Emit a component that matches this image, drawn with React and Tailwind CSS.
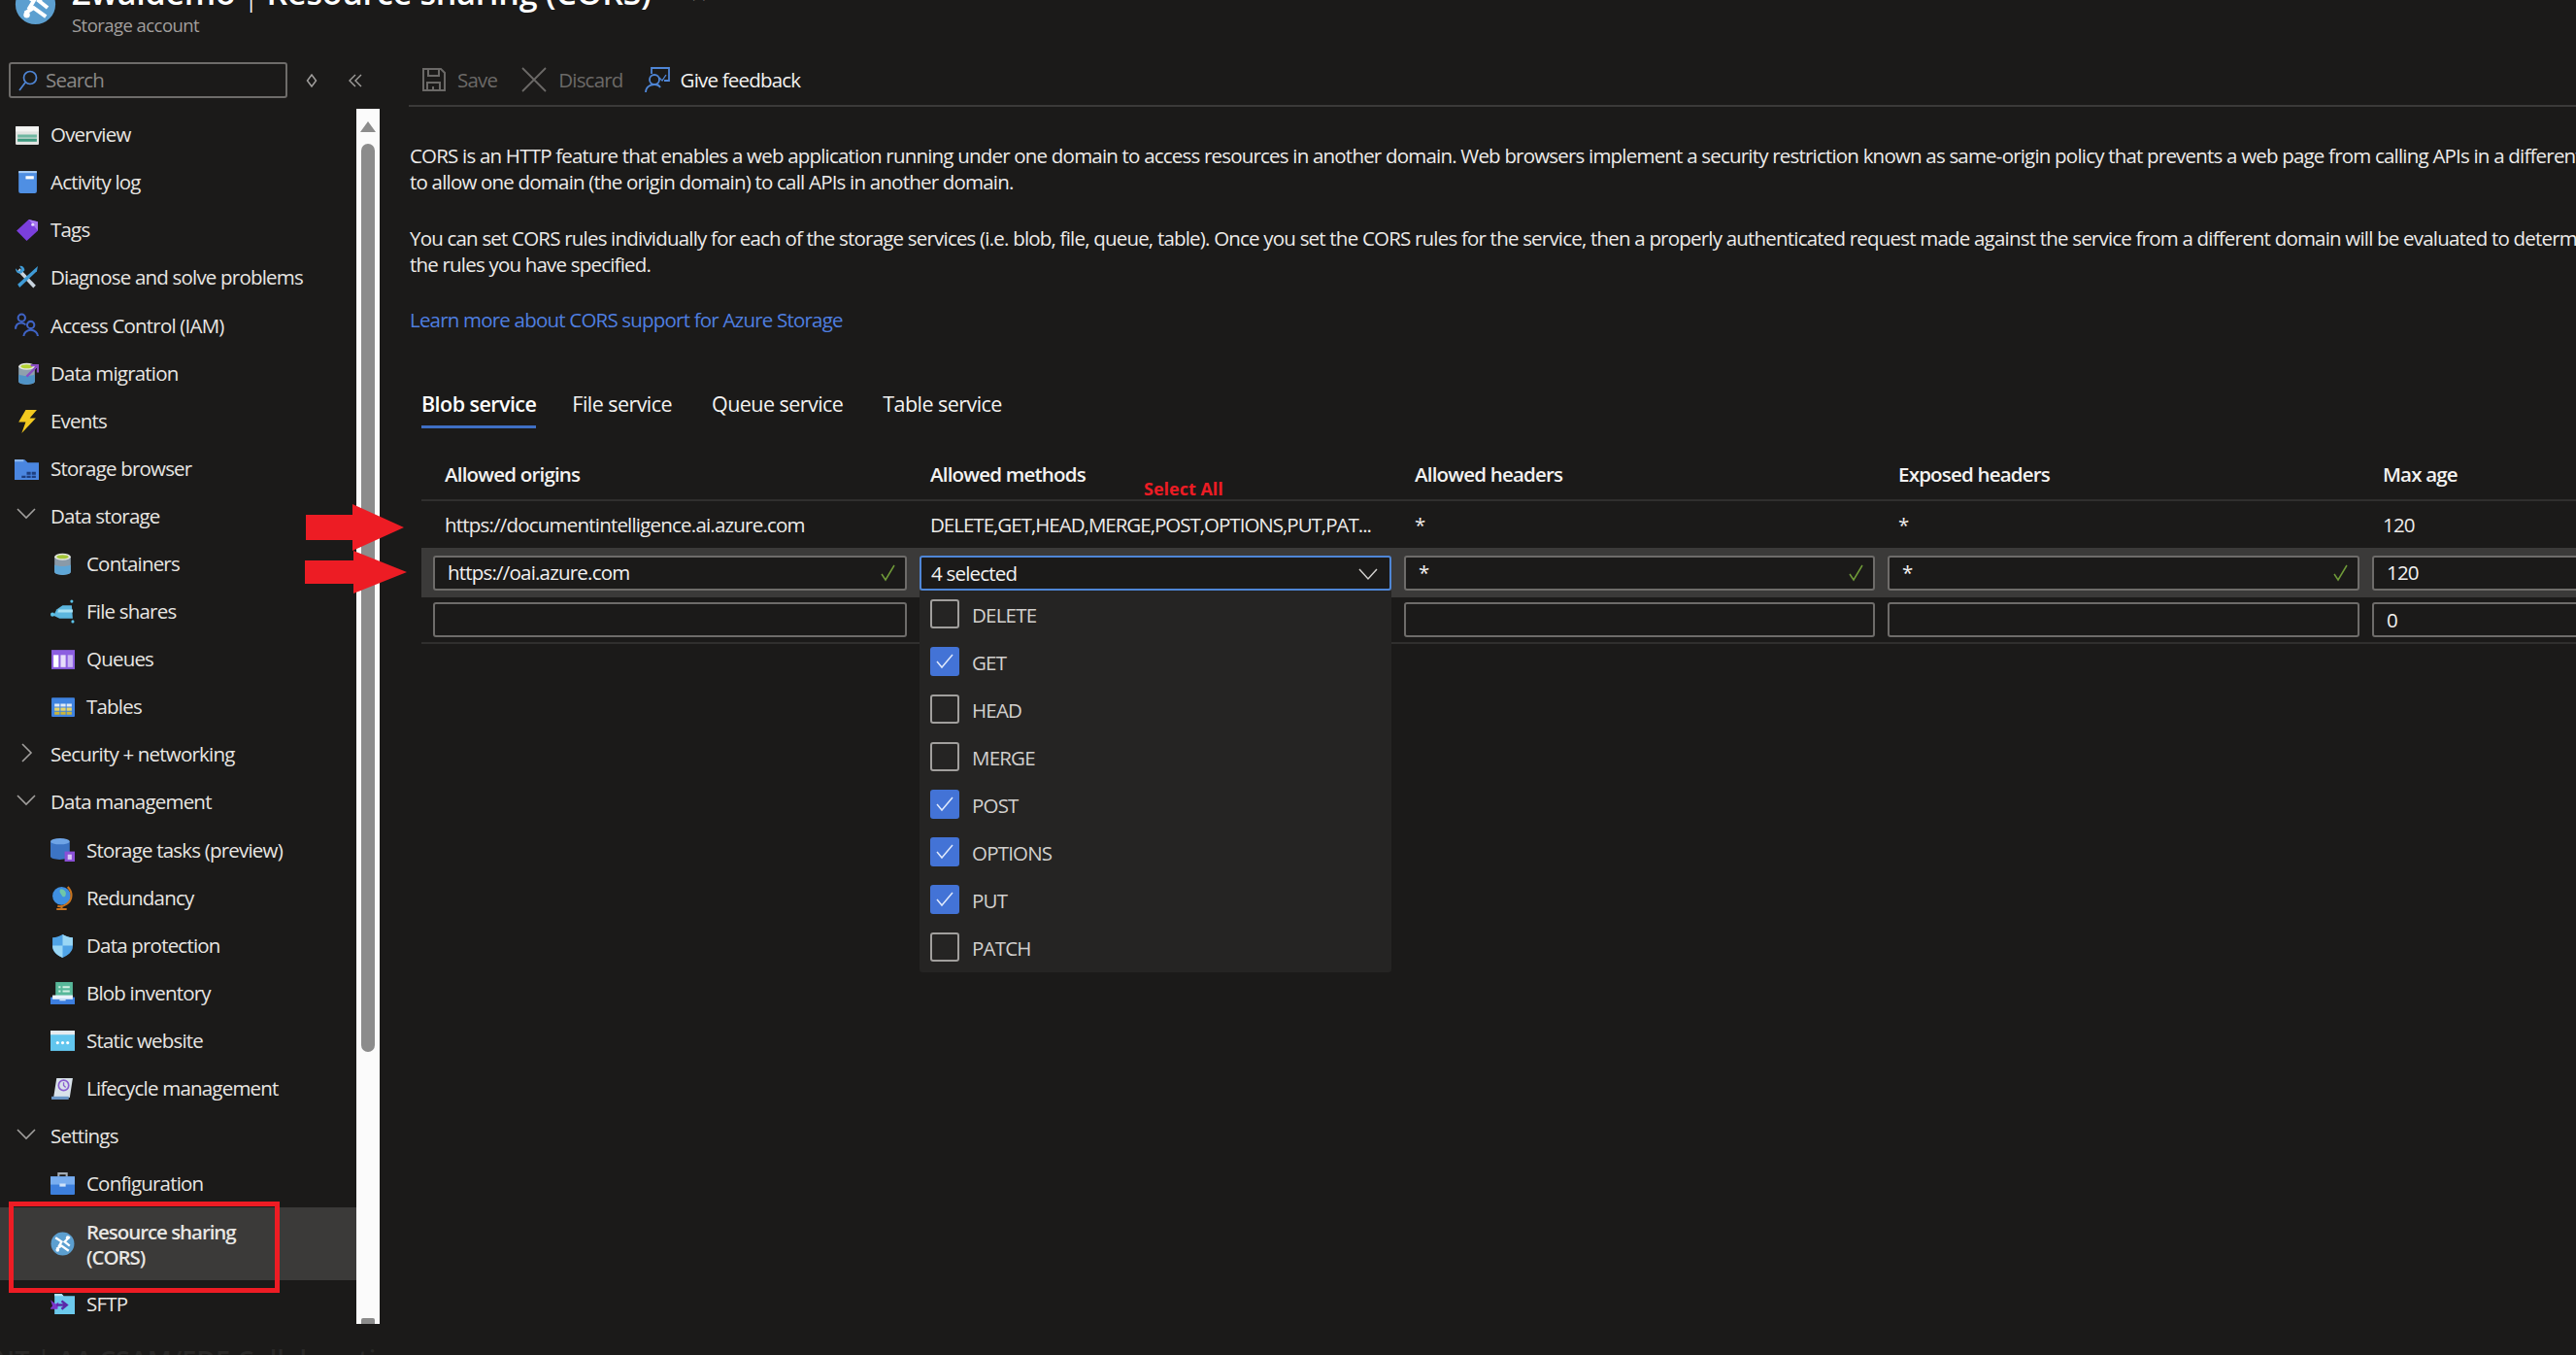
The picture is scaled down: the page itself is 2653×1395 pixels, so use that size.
const Cyl = ({ top = '#a4c639', body = '#8a9aa8', low = '#5ea6d6' }) => (
  <>
    <path d="M4 5v15c0 1.6 3.6 3 8 3s8-1.4 8-3V5z" fill={body} />
    <path d="M4 13v7c0 1.6 3.6 3 8 3s8-1.4 8-3v-7c-2 1-5 1.4-8 1.4S6 14 4 13z" fill={low} />
    <ellipse cx="12" cy="5" rx="8" ry="3.4" fill="#e4e6e0" />
    <ellipse cx="12" cy="5" rx="6" ry="2" fill={top} />
  </>
)

const Globe = () => (
  <>
    <circle cx="12" cy="12" r="11.5" fill="#5c9fd0" />
    <path d="M5 6l6 4-3 5M19 5l-5 5 5 4M6 17l5-3 7 5" stroke="#fff" strokeWidth="2.2" fill="none" />
    <circle cx="7" cy="18" r="1.8" fill="#fff" />
    <circle cx="17" cy="6" r="1.8" fill="#fff" />
  </>
)

const icons = {
  overview: (
    <>
      <rect x="1" y="4" width="23" height="18" rx="1" fill="#e2e4e2" />
      <rect x="1" y="4" width="23" height="5" fill="#f4f5f3" />
      <rect x="3" y="12" width="19" height="3" fill="#6fb7a2" />
      <rect x="3" y="16" width="19" height="3" fill="#3f9a80" />
    </>
  ),
  activity: (
    <>
      <rect x="4" y="1" width="18" height="22" rx="2" fill="#4f8fe3" />
      <rect x="4" y="1" width="18" height="2" fill="#a9cdf5" />
      <rect x="11" y="6" width="8" height="3" fill="#fff" />
    </>
  ),
  tags: (
    <>
      <path d="M2 13L14 2l9 2 0 9-11 10z" fill="#7b3fdc" />
      <path d="M14 2l9 2 0 9z" fill="#a777ef" />
      <circle cx="18" cy="7" r="1.5" fill="#e7dcfb" />
    </>
  ),
  tools: (
    <>
      <path d="M5 3l16 17-2.5 2.5L3 6z" fill="#c9d4de" />
      <path d="M23 1L3 19l2 3L22 6z" fill="#3f9bd6" />
      <path d="M1 3c0 4 3 6 6 5l3-3c0-3-3-5-5-4l2 3-3 2z" fill="#3f9bd6" />
    </>
  ),
  access: (
    <g fill="none" stroke="#3f63c4" strokeWidth="2">
      <circle cx="7" cy="5" r="3.5" />
      <path d="M1 16c0-4 2-6 6-6 2 0 3 .6 4 2" />
      <circle cx="16" cy="12" r="3.5" />
      <path d="M9 23c0-3 3-6 7-6s7 3 7 6" />
    </g>
  ),
  migration: (
    <>
      <Cyl top="#b5d334" body="#8fa1ad" low="#4f93c7" />
      <path d="M12 15L22 5M16 4h7v7" stroke="#8a4ec2" strokeWidth="2.2" fill="none" />
    </>
  ),
  events: <path d="M11 1h11l-7 8h6L7 24l4-11H4z" fill="#f2c91f" />,
  browser: (
    <>
      <path d="M0 3h10l3 3h11v17H0z" fill="#4a86e0" />
      <rect x="0" y="3" width="9" height="2" fill="#8fb9ef" />
      <path d="M7 19h4v2H7zM12 19h4v2h-4zM17 19h4v2h-4zM12 15h4v3h-4zM17 15h4v3h-4z" fill="#1e3f7f" />
    </>
  ),
  containers: <Cyl top="#a4c639" />,
  files: (
    <>
      <path d="M6 10l6-4h9l1 13H9L3 16z" fill="#5cb6de" />
      <path d="M8 10h14v3H7z" fill="#a9e0f2" />
      <circle cx="2" cy="15" r="2" fill="#5cc2e8" />
      <circle cx="21" cy="2" r="1.5" fill="#5cc2e8" />
      <circle cx="22" cy="22" r="1.5" fill="#5cc2e8" />
    </>
  ),
  queues: (
    <>
      <rect x="1" y="3" width="23" height="19" fill="#8c5ee0" />
      <rect x="3" y="8" width="5" height="12" fill="#fff" />
      <rect x="10" y="8" width="5" height="12" fill="#e6dcfa" />
      <rect x="17" y="8" width="5" height="12" fill="#c9b5f2" />
    </>
  ),
  tables: (
    <>
      <rect x="1" y="3" width="23" height="19" rx="1" fill="#3f83e0" />
      <path d="M4 9h5v3H4zM10 9h5v3h-5zM16 9h5v3h-5z" fill="#dfe9f5" />
      <path d="M4 13h5v3H4zM10 13h5v3h-5zM16 13h5v3h-5z" fill="#e8d66a" />
      <path d="M4 17h5v3H4zM10 17h5v3h-5zM16 17h5v3h-5z" fill="#cbb53c" />
    </>
  ),
  tasks: (
    <>
      <path d="M0 4v15c0 1.6 4 3 9 3s10-1.4 10-3V4z" fill="#3c74c4" />
      <ellipse cx="9.5" cy="4" rx="9.5" ry="3" fill="#6ea4e6" />
      <rect x="14" y="14" width="10" height="11" fill="#8a4fd6" />
      <rect x="17" y="17" width="4" height="5" fill="#d8c6f5" />
    </>
  ),
  redundancy: (
    <>
      <circle cx="11" cy="10" r="9" fill="#3f8fe0" />
      <path d="M10 3c4 0 6 3 5 6s-3 2-4 0-3-3-1-6z" fill="#6fc7a8" />
      <path d="M17 1c5 5 5 13-1 17-3 2-6 3-9 2" stroke="#c9741f" strokeWidth="2" fill="none" />
      <path d="M11 20v2M6 23h10" stroke="#c9741f" strokeWidth="2" />
    </>
  ),
  shield: (
    <>
      <path d="M12 1c3 2 6 3 10 3v9c0 5-5 9-10 11C7 22 2 18 2 13V4c4 0 7-1 10-3z" fill="#4fa3e6" />
      <path d="M12 1c3 2 6 3 10 3v8H12zM12 12v12C7 22 2 18 2 12z" fill="#9ad7f5" />
    </>
  ),
  inventory: (
    <>
      <path d="M5 1h17v15H5z" fill="#58b89a" />
      <path d="M8 5h2v2H8zM8 9h2v2H8zM12 5h7v2h-7zM12 9h7v2h-7z" fill="#d2efe4" />
      <path d="M0 16h24v7H0z" fill="#3d7fe0" />
      <path d="M2 14h20v4H2z" fill="#e9f2fb" />
      <rect x="9" y="18" width="6" height="1.5" fill="#cfe2f8" />
    </>
  ),
  website: (
    <>
      <rect x="0" y="2" width="24" height="20" fill="#62c6ee" />
      <rect x="0" y="2" width="24" height="4" fill="#e6ebee" />
      <circle cx="7" cy="14" r="1.5" fill="#fff" />
      <circle cx="12" cy="14" r="1.5" fill="#fff" />
      <circle cx="17" cy="14" r="1.5" fill="#fff" />
    </>
  ),
  lifecycle: (
    <>
      <path d="M6 2h16l-3 19H3z" fill="#d9e2ea" />
      <path d="M1 20h17v3H1z" fill="#6b97c7" />
      <circle cx="13" cy="9" r="5" fill="none" stroke="#8a5fd0" strokeWidth="1.6" />
      <path d="M13 6v3l2 2" stroke="#8a5fd0" strokeWidth="1.3" fill="none" />
    </>
  ),
  config: (
    <>
      <path d="M8 5V2h8v3" fill="none" stroke="#a3acb5" strokeWidth="2" />
      <rect x="0" y="5" width="24" height="18" rx="1" fill="#3d7fdc" />
      <rect x="0" y="5" width="24" height="8" fill="#79aef0" />
      <rect x="9" y="12" width="6" height="3" fill="#cfe2f8" />
    </>
  ),
  cors: <Globe />,
  sftp: (
    <>
      <path d="M4 2h7l2 2h11v18H4z" fill="#6cc9ec" />
      <path d="M4 2h7l2 2H4z" fill="#b7e7f7" />
      <path d="M0 8l5 4 3-2-1 7-8 0 3-3z" fill="#7a35c9" />
      <path d="M6 13h9M11 9l5 4-5 4" stroke="#5a28a8" strokeWidth="2.4" fill="none" />
    </>
  ),
}

const menu = [
  { label: 'Overview', icon: 'overview' },
  { label: 'Activity log', icon: 'activity' },
  { label: 'Tags', icon: 'tags' },
  { label: 'Diagnose and solve problems', icon: 'tools' },
  { label: 'Access Control (IAM)', icon: 'access' },
  { label: 'Data migration', icon: 'migration' },
  { label: 'Events', icon: 'events' },
  { label: 'Storage browser', icon: 'browser' },
  { label: 'Data storage', open: true },
  { label: 'Containers', icon: 'containers', sub: true },
  { label: 'File shares', icon: 'files', sub: true },
  { label: 'Queues', icon: 'queues', sub: true },
  { label: 'Tables', icon: 'tables', sub: true },
  { label: 'Security + networking', open: false },
  { label: 'Data management', open: true },
  { label: 'Storage tasks (preview)', icon: 'tasks', sub: true },
  { label: 'Redundancy', icon: 'redundancy', sub: true },
  { label: 'Data protection', icon: 'shield', sub: true },
  { label: 'Blob inventory', icon: 'inventory', sub: true },
  { label: 'Static website', icon: 'website', sub: true },
  { label: 'Lifecycle management', icon: 'lifecycle', sub: true },
  { label: 'Settings', open: true },
  { label: 'Configuration', icon: 'config', sub: true },
  { label: 'Resource sharing (CORS)', icon: 'cors', sub: true, active: true },
  { label: 'SFTP', icon: 'sftp', sub: true },
]

const methods = [
  ['DELETE', false],
  ['GET', true],
  ['HEAD', false],
  ['MERGE', false],
  ['POST', true],
  ['OPTIONS', true],
  ['PUT', true],
  ['PATCH', false],
]

function Chevron({ open }) {
  return (
    <svg width="24" height="24" viewBox="0 0 24 24" fill="none" stroke="#a19f9d" strokeWidth="1.6" className="-mt-[4px]">
      <path d={open ? 'M3 7l9 9 9-9' : 'M8 3l9 9-9 9'} />
    </svg>
  )
}

function MenuRow({ item }) {
  if (item.open !== undefined) {
    return (
      <div className="flex h-[49.1px] items-center">
        <div className="flex w-[52px] justify-center pl-[2px]"><Chevron open={item.open} /></div>
        <span>{item.label}</span>
      </div>
    )
  }
  return (
    <div className={item.active ? 'flex h-[75px] items-center bg-[#3b3a39] font-semibold' : 'flex h-[49.1px] items-center'}>
      <svg
        width="25"
        height="25"
        viewBox="0 0 24 24"
        className={item.sub ? 'ml-[52px] mr-[12px] shrink-0' : 'ml-[15px] mr-[12px] shrink-0'}
      >
        {icons[item.icon]}
      </svg>
      <span className={item.active ? 'w-[175px] leading-[26px] tracking-[-1.05px]' : 'whitespace-nowrap'}>{item.label}</span>
    </div>
  )
}

function Check() {
  return (
    <svg width="16" height="18" viewBox="0 0 16 18" fill="none" stroke="#6f9a38" strokeWidth="1.5" className="absolute right-[9px] top-[7px]">
      <path d="M1 10l4 6L14 1" />
    </svg>
  )
}

function Field({ value, check }) {
  return (
    <div className="relative flex h-[36px] items-center rounded-[3px] border-2 border-[#6e6c6a] bg-[#1b1a19] pl-[13px] text-[#f3f2f1]">
      {value}
      {check && <Check />}
    </div>
  )
}

const rowGrid = 'grid w-[2300px] grid-cols-[488px_486px_485px_486px_300px] gap-x-[13px] px-[12px]'

export default function App() {
  return (
    <div className="relative flex h-[1395px] w-[2653px] flex-col overflow-hidden bg-[#1b1a19] font-['Open_Sans',sans-serif] text-[20.5px] tracking-[-0.8px] text-[#edebe9]">
      <header className="flex h-[56px] shrink-0 pl-[15px]">
        <svg width="43" height="43" viewBox="0 0 24 24" className="-mt-[17px]"><Globe /></svg>
        <div className="ml-[16px] flex flex-col">
          <div className="-mt-[29px] flex h-[42px] items-center whitespace-nowrap text-[34px] font-semibold leading-[42px] tracking-[-0.25px] text-white">
            <span>Zwaldemo</span>
            <span className="mx-[7px] font-light">|</span>
            <span>Resource sharing (CORS)</span>
            <span className="ml-[38px] text-[24px] font-normal text-[#a19f9d]">☆</span>
          </div>
          <span className="mt-[1px] text-[18.5px] leading-[24px] tracking-[-0.55px] text-[#a19f9d]">Storage account</span>
        </div>
      </header>

      <div className="flex min-h-0 flex-1">
        <aside className="w-[421px] shrink-0">
          <div className="mt-[8px] flex h-[37px] items-center pl-[9px]">
            <div className="flex h-[37px] w-[287px] items-center rounded-[3px] border-2 border-[#6e6c6a] pl-[8px] text-[#8a8886]">
              <svg width="20" height="24" viewBox="0 0 20 24" fill="none" stroke="#4f86d6" strokeWidth="1.7" className="mr-[8px]">
                <circle cx="12" cy="9" r="6.5" />
                <path d="M7 14l-6 8" />
              </svg>
              Search
            </div>
            <svg width="12" height="14" viewBox="0 0 12 14" fill="none" stroke="#a19f9d" strokeWidth="1.5" className="ml-[19px]">
              <path d="M6 1l4.5 6L6 13 1.5 7z" />
            </svg>
            <svg width="14" height="14" viewBox="0 0 14 14" fill="none" stroke="#a19f9d" strokeWidth="1.4" className="ml-[32px]">
              <path d="M7 1L1 7l6 6M13 1L7 7l6 6" />
            </svg>
          </div>
          <div className="mt-[11px] flex h-[1251px]">
            <nav className="w-[367px] overflow-hidden pt-[2px] text-[#e8e6e3]">
              {menu.map((m) => (
                <MenuRow key={m.label} item={m} />
              ))}
            </nav>
            <div className="flex w-[24px] flex-col items-center overflow-hidden bg-[#fbfbfb] pt-[13px]">
              <div className="h-0 w-0 border-x-[8px] border-b-[11px] border-x-transparent border-b-[#8c8c8c]" />
              <div className="mt-[12px] h-[935px] w-[14px] shrink-0 rounded-full bg-[#8c8c8c]" />
              <div className="mt-[274px] h-[6px] w-[14px] shrink-0 rounded-t-[2px] bg-[#8c8c8c]" />
            </div>
          </div>
        </aside>

        <main className="min-w-0 flex-1">
          <div className="flex h-[54px] items-center border-b-2 border-[#3b3a39] pl-[13px]">
            <svg width="25" height="26" viewBox="0 0 25 26" fill="none" stroke="#6b6967" strokeWidth="2">
              <path d="M2 2h18l4 4v18H2zM7 2v7h11V2M6 24v-8h13v8M12 20v4" />
            </svg>
            <span className="ml-[12px] text-[#6b6967]">Save</span>
            <svg width="26" height="26" viewBox="0 0 26 26" fill="none" stroke="#6b6967" strokeWidth="1.8" className="ml-[25px]">
              <path d="M1 1l24 24M25 1L1 25" />
            </svg>
            <span className="ml-[12px] text-[#6b6967]">Discard</span>
            <svg width="27" height="27" viewBox="0 0 27 27" fill="none" stroke="#4f86d6" strokeWidth="1.8" className="ml-[22px]">
              <path d="M7 7V1h18v13h-5" />
              <path d="M15 11l3 3 4-6" strokeWidth="1.3" />
              <circle cx="10" cy="13" r="5" />
              <path d="M1 26c0-5 4-8 9-8 3 0 5 1 6 3" />
            </svg>
            <span className="ml-[10px] text-[#f3f2f1]">Give feedback</span>
          </div>

          <div className="pl-px pt-[37px] leading-[27px] text-[#edebe9]">
            <p className="whitespace-nowrap">
              CORS is an HTTP feature that enables a web application running under one domain to access resources in another domain. Web browsers implement a security restriction known as same-origin policy that prevents a web page from calling APIs in a different domain. CORS
              <br />
              to allow one domain (the origin domain) to call APIs in another domain.
            </p>
            <p className="mt-[31px] whitespace-nowrap">
              You can set CORS rules individually for each of the storage services (i.e. blob, file, queue, table). Once you set the CORS rules for the service, then a properly authenticated request made against the service from a different domain will be evaluated to determine whether it is allowed
              <br />
              the rules you have specified.
            </p>
            <p className="mt-[30px] text-[#4f7fe0]">Learn more about CORS support for Azure Storage</p>
          </div>

          <div className="ml-[13px] mt-[48px] flex h-[50px] gap-[41px] text-[21.5px] tracking-[-0.55px] text-[#f3f2f1]">
            <div className="-mr-[4px] flex items-center border-b-[3px] border-[#3f6fc4] pt-[3px] font-semibold text-white">Blob service</div>
            <div className="flex items-center pb-[3px] pt-[3px]">File service</div>
            <div className="flex items-center pb-[3px] pt-[3px]">Queue service</div>
            <div className="flex items-center pb-[3px] pt-[3px]">Table service</div>
          </div>

          <div className="ml-[13px] mt-[23px]">
            <div className={`${rowGrid} h-[52px] items-center border-b-2 border-[#302f2e] pb-[2px] font-semibold text-[#f3f2f1]`}>
              <div className="pl-[12px]">Allowed origins</div>
              <div className="pl-[11px]">Allowed methods</div>
              <div className="pl-[11px]">Allowed headers</div>
              <div className="pl-[11px]">Exposed headers</div>
              <div className="pl-[11px]">Max age</div>
            </div>
            <div className={`${rowGrid} h-[48px] items-center`}>
              <div className="pl-[12px]">https://documentintelligence.ai.azure.com</div>
              <div className="overflow-hidden pl-[11px] tracking-[-1px] whitespace-nowrap">DELETE,GET,HEAD,MERGE,POST,OPTIONS,PUT,PAT...</div>
              <div className="pl-[11px]">*</div>
              <div className="pl-[11px]">*</div>
              <div className="pl-[11px]">120</div>
            </div>
            <div className={`${rowGrid} h-[51px] items-center bg-[#3b3a39]`}>
              <Field value="https://oai.azure.com" check />
              <div className="relative z-10">
                <div className="flex h-[36px] items-center justify-between rounded-[3px] border-2 border-[#4f86d6] bg-[#1b1a19] pl-[10px] pr-[12px] pt-[2px] text-[#f3f2f1]">
                  4 selected
                  <svg width="20" height="20" viewBox="0 0 20 20" fill="none" stroke="#d2d0ce" strokeWidth="1.5">
                    <path d="M1 5l9 10 9-10" />
                  </svg>
                </div>
                <div className="absolute left-0 top-[36px] w-full rounded-b-[3px] bg-[#252423] pl-[11px] pt-[9px] text-[#d2d0ce]">
                  {methods.map(([name, on]) => (
                    <div key={name} className="flex h-[49px] items-start last:h-[41px]">
                      {on ? (
                        <div className="flex h-[30px] w-[30px] items-center justify-center rounded-[3px] bg-[#4373d6]">
                          <svg width="18" height="16" viewBox="0 0 18 16" fill="none" stroke="#dfe9fb" strokeWidth="1.5">
                            <path d="M1 8l5 6L17 1" />
                          </svg>
                        </div>
                      ) : (
                        <div className="h-[30px] w-[30px] rounded-[3px] border-2 border-[#a19f9d]" />
                      )}
                      <span className="ml-[13px] mt-[1px]">{name}</span>
                    </div>
                  ))}
                </div>
              </div>
              <Field value="*" check />
              <Field value="*" check />
              <Field value="120" />
            </div>
            <div className={`${rowGrid} h-[48px] items-start border-b-2 border-[#302f2e] pt-[5px]`}>
              <Field />
              <div />
              <Field />
              <Field />
              <Field value="0" />
            </div>
          </div>
        </main>
      </div>

      {/* annotations pasted over the screenshot */}
      <div className="absolute left-[9px] top-[1237px] h-[94px] w-[279px] border-[5px] border-[#ed1c24]" />
      <svg width="108" height="94" viewBox="0 0 108 94" className="absolute left-[314px] top-[519px]">
        <path d="M1 11h48V0l53 24-53 24V37H1z" fill="#ed1c24" />
        <path d="M0 58h50V48l55 22-55 22V82H0z" fill="#ed1c24" />
      </svg>
      <span className="absolute left-[1178px] top-[490px] text-[18px] font-bold tracking-normal text-[#ed1c24]">Select All</span>
      <span className="absolute left-[-6px] top-[1386px] whitespace-nowrap text-[27px] font-semibold leading-none tracking-normal text-[#292827]">NT | AA CSAM/EDE Collaboration</span>
    </div>
  )
}
